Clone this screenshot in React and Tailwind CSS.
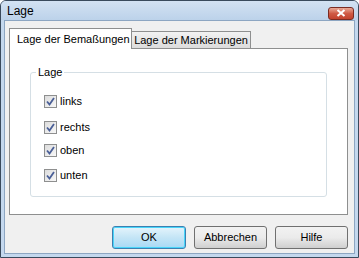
import React from "react";

function Check({ label, mt }) {
  return (
    <div className={`flex items-center ${mt}`}>
      <div className="w-[13px] h-[13px] border border-[#8e8f8f] bg-gradient-to-br from-[#dcdcdc] to-[#f8f8f8] flex items-center justify-center">
        <svg width="9" height="9" viewBox="0 0 9 9">
          <path d="M1 4.5 L3.5 7.5 L8 1" fill="none" stroke="#4a5f97" strokeWidth="1.8" />
        </svg>
      </div>
      <span className="ml-[3px] text-[11px] leading-[14px] text-black">{label}</span>
    </div>
  );
}

export default function App() {
  return (
    <div
      className="w-[359px] h-[258px] bg-[#c4d8ee] border border-[#3a4a5c] rounded-t-[6px] flex flex-col overflow-hidden whitespace-nowrap"
      style={{ fontFamily: "'Liberation Sans', sans-serif" }}
    >
      <div className="h-[19px] flex items-center justify-between pl-[6px] pr-[4px] bg-gradient-to-b from-[#d3e2f2] to-[#bcd2ea]">
        <span className="text-[12px] text-black">Lage</span>
        <div className="w-[26px] h-[13px] mt-[5px] rounded-[3px] border border-[#7a2b22] bg-gradient-to-b from-[#e7a896] via-[#cf5a45] to-[#c2412c] flex items-center justify-center">
          <svg width="10" height="8" viewBox="0 0 10 8">
            <path d="M1.5 1 L8.5 7 M8.5 1 L1.5 7" stroke="white" strokeWidth="2" />
          </svg>
        </div>
      </div>
      <div className="flex-1 mx-[3px] mb-[3px] bg-[#f0f0f0] border border-[#8da6c2] flex flex-col">
        <div className="ml-[4px] mr-[6px] mt-[7px] flex flex-col">
          <div className="flex items-end h-[20px]">
            <div className="h-[21px] w-[123px] bg-white border border-b-0 border-[#8e8f8f] flex items-center pl-[7px] text-[11px] text-black relative z-10 -mb-px">
              Lage der Bemaßungen
            </div>
            <div className="h-[17px] w-[119px] bg-gradient-to-b from-[#f2f2f2] to-[#dcdcdc] border border-b-0 border-l-0 border-[#8e8f8f] flex items-center justify-center text-[11px] text-black">
              Lage der Markierungen
            </div>
          </div>
          <div className="h-[167px] bg-white border border-[#8e8f8f] pt-[23px] pl-[20px] pr-[20px]">
            <div className="relative h-[125px] border border-[#d5dfe5] rounded-[3px] pl-[13px] pt-[21px]">
              <span className="absolute -top-[8px] left-[5px] bg-white px-[2px] text-[11px] leading-[14px] text-black">Lage</span>
              <Check label="links" mt="" />
              <Check label="rechts" mt="mt-[12px]" />
              <Check label="oben" mt="mt-[9px]" />
              <Check label="unten" mt="mt-[11px]" />
            </div>
          </div>
        </div>
        <div className="flex justify-end gap-[8px] mt-[11px] mr-[6px]">
          <div className="w-[74px] h-[23px] rounded-[3px] border border-[#3c7fb1] bg-gradient-to-b from-[#e5f4fc] via-[#c4e5f6] to-[#a7d9f5] shadow-[inset_0_0_0_1px_#48d5f9] flex items-center justify-center text-[11px] text-black">OK</div>
          <div className="w-[73px] h-[23px] rounded-[3px] border border-[#707070] bg-gradient-to-b from-[#f2f2f2] via-[#ebebeb] to-[#cfcfcf] flex items-center justify-center text-[11px] text-black">Abbrechen</div>
          <div className="w-[73px] h-[23px] rounded-[3px] border border-[#707070] bg-gradient-to-b from-[#f2f2f2] via-[#ebebeb] to-[#cfcfcf] flex items-center justify-center text-[11px] text-black">Hilfe</div>
        </div>
      </div>
    </div>
  );
}
